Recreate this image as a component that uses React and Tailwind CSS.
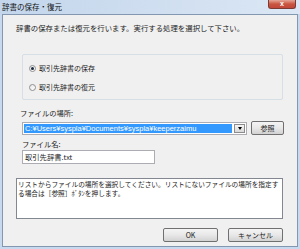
const jp = "font-['Noto_Sans_CJK_JP',sans-serif]";

const Radio = ({ checked, label }) => (
  <div className="flex items-center h-[10px]">
    <span className="relative w-[7px] h-[7px] rounded-full border border-[#8f8f8f] bg-gradient-to-br from-[#e6e6e6] to-white flex items-center justify-center">
      {checked && <span className="w-[3px] h-[3px] rounded-full bg-[#1b2a40]" />}
    </span>
    <span className="ml-[3px] text-[7px] leading-[10px] text-[#222]">{label}</span>
  </div>
);

const WinButton = ({ children, className = "" }) => (
  <button
    className={`h-[14px] rounded-[2px] border border-[#707070] bg-gradient-to-b from-[#f4f4f4] via-[#e8e8e8] to-[#d2d2d2] text-[7px] leading-[12px] text-[#222] ${className}`}
  >
    {children}
  </button>
);

export default function App() {
  return (
    <div className={`w-[300px] h-[249px] flex flex-col bg-[#c7d9ee] ${jp}`}>
      {/* title bar */}
      <div className="relative h-[14px] bg-gradient-to-r from-[#c3d6ec] via-[#cfdef0] to-[#dbe7f4]">
        <span className="absolute left-[2px] top-[1px] text-[7.5px] leading-[11px] text-[#111]">
          辞書の保存・復元
        </span>
        <div className="absolute left-[268px] top-0 w-[28px] h-[9px] rounded-b-[3px] border border-t-0 border-[#7a3b35] bg-gradient-to-b from-[#e4a598] via-[#c9553f] to-[#c2473a] flex items-center justify-center">
          <span className="text-white text-[7px] leading-[8px] font-bold font-['Liberation_Sans',sans-serif]">x</span>
        </div>
      </div>

      {/* client area */}
      <div className="flex-1 mx-[2px] mb-[2px] border border-[#8497b0] bg-[#f0f0f0] flex flex-col">
        <p className="mt-[8px] ml-[13px] text-[7.4px] leading-[10px] text-[#222] whitespace-nowrap">
          辞書の保存または復元を行います。実行する処理を選択して下さい。
        </p>

        <div className="mt-[21px] ml-[19px] w-[261px] h-[46px] border border-[#d5dfe5] rounded-[2px] flex flex-col pl-[6px] pt-[8px] gap-[9px]">
          <Radio checked label="取引先辞書の保存" />
          <Radio label="取引先辞書の復元" />
        </div>

        <p className="mt-[8px] ml-[17px] text-[7.3px] leading-[10px] text-[#222]">ファイルの場所:</p>
        <div className="mt-[3px] ml-[19px] flex items-center">
          <div className="w-[225px] h-[13px] border border-[#abadb3] bg-white flex items-center p-[1px]">
            <div className="flex-1 h-full bg-[#3399ff] text-white text-[7.5px] leading-[9px] px-[1px] whitespace-nowrap overflow-hidden font-['Liberation_Sans','Noto_Sans_CJK_JP',sans-serif]">
              C:¥Users¥syspla¥Documents¥syspla¥keeperzaimu
            </div>
            <div className="ml-[2px] w-[11px] h-full border border-[#8c8c8c] bg-gradient-to-b from-[#f6f6f6] to-[#d8d8d8] flex items-center justify-center">
              <span className="w-0 h-0 border-l-[2.5px] border-r-[2.5px] border-t-[3px] border-l-transparent border-r-transparent border-t-black" />
            </div>
          </div>
          <WinButton className="ml-[4px] w-[33px]">参照</WinButton>
        </div>

        <p className="mt-[4px] ml-[19px] text-[7.3px] leading-[10px] text-[#222]">ファイル名:</p>
        <div className="mt-[1px] ml-[19px] w-[133px] h-[14px] border border-[#abadb3] bg-white px-[2px] text-[7.3px] leading-[12px] text-[#222]">
          取引先辞書.txt
        </div>

        <div className="mt-[14px] ml-[13px] w-[267px] h-[41px] border border-[#828790] bg-white px-[1px] pt-[1px] text-[6.7px] leading-[9px] text-[#222] whitespace-nowrap overflow-hidden">
          <div>リストからファイルの場所を選択してください。リストにないファイルの場所を指定す</div>
          <div>る場合は［参照］ﾎﾞﾀﾝを押します。</div>
        </div>

        <div className="mt-[9px] ml-[160px] flex gap-[10px]">
          <WinButton className="w-[55px]">OK</WinButton>
          <WinButton className="w-[55px]">キャンセル</WinButton>
        </div>
      </div>
    </div>
  );
}
